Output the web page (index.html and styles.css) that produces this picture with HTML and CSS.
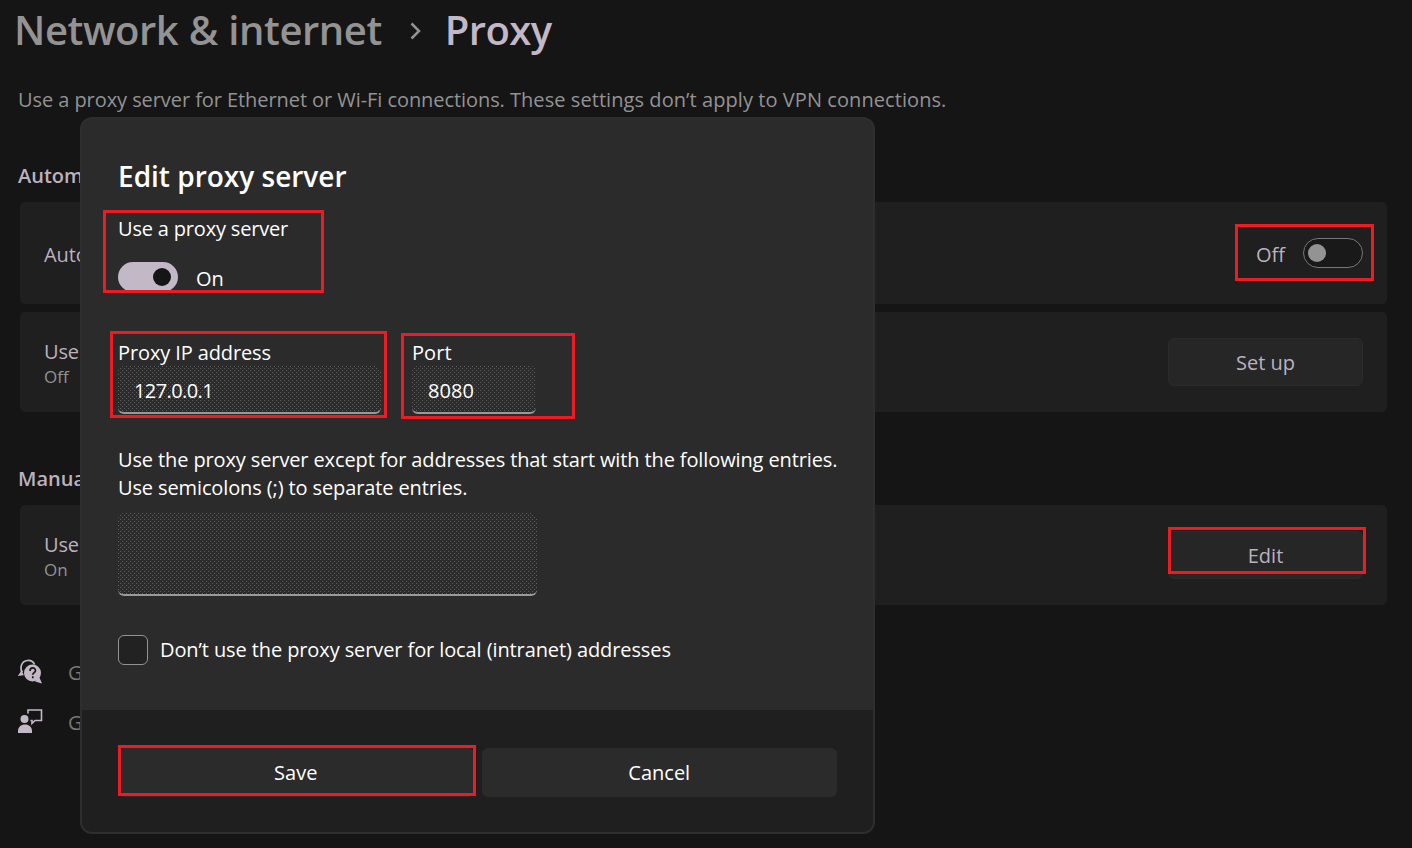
FILE: index.html
```
<!DOCTYPE html>
<html lang="en">
<head>
<meta charset="utf-8">
<title>Proxy</title>
<link rel="stylesheet" href="styles.css">
</head>
<body>
<main class="page">
  <header class="crumbs">
    <h1 class="crumb crumb-parent">Network &amp; internet</h1>
    <svg class="chevron" width="12" height="18" viewBox="0 0 12 18"><path d="M1.500 1.500L9 9l-7.500 7.500" fill="none" stroke="#939393" stroke-width="2.500"/></svg>
    <h1 class="crumb crumb-current">Proxy</h1>
  </header>
  <p class="intro"><span class="intro-first">Use a proxy server for Ethernet or Wi-Fi connections. </span><span class="intro-second">These settings don’t apply to VPN connections.</span></p>

  <h2 class="section">Autom</h2>
  <section class="card card-tall">
    <div class="labels"><span class="label">Auto</span></div>
    <div class="toggle-row"><span>Off</span><span class="toggle toggle-off"></span></div>
  </section>
  <section class="card">
    <div class="labels"><span class="label">Use</span><span class="state">Off</span></div>
    <button class="btn">Set up</button>
  </section>

  <h2 class="section section-manual">Manua</h2>
  <section class="card">
    <div class="labels"><span class="label">Use</span><span class="state">On</span></div>
    <button class="btn">Edit</button>
  </section>

  <nav class="links">
    <a class="link">
      <svg class="link-icon" width="26" height="26" viewBox="0 0 26 26"><path d="M4.500 15.500C1.500 9 3 2 9.500 1.500c3.500-.300 6 1.500 7 4M4.500 11.500L1.500 16l4-.500" fill="none" stroke="#c3b8c6" stroke-width="1.700"/><circle cx="14.500" cy="14" r="8.500" fill="#c3b8c6"/><path d="M21 17.500l3 7-7-2z" fill="#c3b8c6"/><path d="M12 12c0-4 5.500-4 5.500-.500 0 2.200-2.700 2-2.700 4.300M14.800 17.300v2" fill="none" stroke="#151515" stroke-width="1.700"/></svg>
      <span>G</span></a>
    <a class="link">
      <svg class="link-icon" width="26" height="26" viewBox="0 0 26 26"><path d="M10 4.500V1h13.500v10.500H17l-3 2.800v-2.800h-1.500" fill="none" stroke="#c3b8c6" stroke-width="1.600"/><circle cx="6.500" cy="10" r="4" fill="#c3b8c6"/><path d="M0 24v-2c0-4 3-6.500 7-6.500s7 2.500 7 6.500v2z" fill="#c3b8c6"/></svg>
      <span>G</span></a>
  </nav>
</main>

<div class="dialog" role="dialog">
  <div class="dialog-body">
    <h2 class="dialog-title">Edit proxy server</h2>
    <div class="use">Use a proxy server</div>
    <div class="switch"><span class="toggle toggle-on"></span><span class="switch-text">On</span></div>
    <div class="fields">
      <label class="field field-ip"><span class="field-label">Proxy IP address</span><span class="input input-ip">127.0.0.1</span></label>
      <label class="field field-port"><span class="field-label">Port</span><span class="input">8080</span></label>
    </div>
    <p class="note">Use the proxy server except for addresses that start with the following entries.<br>Use semicolons (;) to separate entries.</p>
    <div class="input textarea"></div>
    <label class="check"><span class="box"></span><span>Don’t use the proxy server for local (intranet) addresses</span></label>
  </div>
  <footer class="dialog-foot"><button class="action">Save</button><button class="action">Cancel</button></footer>
</div>
<div class="mark mark-use"></div>
<div class="mark mark-ip"></div>
<div class="mark mark-port"></div>
<div class="mark mark-save"></div>
<div class="mark mark-off"></div>
<div class="mark mark-edit"></div>
</body>
</html>
```
FILE: styles.css
```
* { box-sizing: border-box; margin: 0; }
body { width: 1412px; height: 848px; overflow: hidden; position: relative; background: #151515; color: #bbb2be; font: 20px/28px "Open Sans", "Noto Sans", sans-serif; }
h1, h2 { font-weight: 600; }
button { font: inherit; color: inherit; border: 0; padding: 2px 0 0; }
.page { padding: 0 25px 0 18px; display: flex; flex-direction: column; }
.crumbs { display: flex; align-items: center; height: 61px; margin-left: -4px; }
.crumb { font-size: 40px; line-height: 59px; padding-bottom: 2px; white-space: nowrap; letter-spacing: -0.44px; }
.crumb-parent { color: #939393; word-spacing: 0.5px; }
.crumb-current { color: #c3b8c6; letter-spacing: -0.6px; }
.chevron { margin: 0 23px 0 28px; }
.intro { margin-top: 25px; color: #939393; white-space: nowrap; }
.intro-first { letter-spacing: -0.07px; }
.intro-second { letter-spacing: 0.07px; }
.section { font-size: 20px; line-height: 28px; margin: 48px 0 12px; white-space: nowrap; }
.section-manual { margin-top: 53px; }
.card { margin-left: 2px; height: 100px; background: #1f1f1f; border-radius: 5px; padding: 0 24px; display: flex; align-items: center; justify-content: space-between; }
.card-tall { height: 102px; margin-bottom: 8px; }
.labels { display: flex; flex-direction: column; padding-top: 2px; }
.card-tall .labels { padding-top: 3px; }
.label { letter-spacing: -0.12px; }
.state { font-size: 17px; line-height: 22px; color: #939393; }
.btn { width: 195px; height: 48px; border-radius: 6px; background: #262626; border: 1px solid #2b2b2b; }
.toggle-row, .switch { display: flex; align-items: center; gap: 18px; }
.toggle-row > :first-child { padding-top: 3px; }
.toggle { width: 60px; height: 30px; border-radius: 15px; display: flex; align-items: center; }
.toggle::before { content: ""; width: 18px; height: 18px; border-radius: 50%; }
.toggle-off { border: 1px solid #777; background: #191919; padding-left: 4px; }
.toggle-off::before { background: #939393; }
.toggle-on { background: #c3b8c6; justify-content: flex-end; padding-right: 7px; }
.toggle-on::before { background: #151515; }
.links { display: flex; flex-direction: column; gap: 22px; margin-top: 54px; }
.link { display: flex; align-items: center; gap: 24px; color: #777; height: 28px; }
.link-icon { margin-bottom: 2px; }
.dialog { position: absolute; left: 80px; top: 117px; width: 795px; height: 717px; border: 2px solid #2e2e2e; border-radius: 12px; background: #2b2b2b; color: #fff; overflow: hidden; display: flex; flex-direction: column; letter-spacing: -0.12px; }
.dialog-body { flex: 1; padding: 39px 36px 0; }
.dialog-title { font-size: 28px; line-height: 36px; letter-spacing: 0; }
.use { margin-top: 21px; letter-spacing: -0.18px; }
.switch { margin-top: 18px; }
.switch-text { padding-top: 4px; }
.fields { display: flex; gap: 31px; margin-top: 47px; }
.field { display: flex; flex-direction: column; }
.field-label { line-height: 26px; }
.field-ip { width: 263px; }
.field-port { width: 124px; letter-spacing: 0.06px; }
.input { height: 48px; border-radius: 6px; border-bottom: 2px solid #999; padding: 3px 16px 0; display: flex; align-items: center; background: radial-gradient(circle at 0.5px 0.5px, #626262 0.6px, transparent 0.7px) 0 0 / 4px 4px, radial-gradient(circle at 0.5px 0.5px, #626262 0.6px, transparent 0.7px) 2px 2px / 4px 4px, #2b2b2b; }
.input-ip { letter-spacing: -0.6px; }
.note { margin-top: 32px; white-space: nowrap; }
.textarea { width: 419px; height: 83px; margin-top: 11px; }
.check { display: flex; align-items: center; gap: 12px; margin-top: 39px; letter-spacing: -0.1px; }
.box { width: 30px; height: 30px; border: 1.500px solid #939393; border-radius: 6px; background: #222; }
.dialog-foot { height: 122px; background: #1f1f1f; padding: 38px 36px 0; display: flex; gap: 8px; }
.action { flex: 1; height: 49px; border-radius: 6px; background: #2b2b2b; padding: 0; }
.mark { position: absolute; border: 3px solid #ed1c24; }
.mark-use { left: 103px; top: 210px; width: 221px; height: 83px; }
.mark-ip { left: 110px; top: 331px; width: 277px; height: 87px; }
.mark-port { left: 401px; top: 333px; width: 174px; height: 86px; }
.mark-save { left: 118px; top: 745px; width: 358px; height: 51px; }
.mark-off { left: 1235px; top: 224px; width: 139px; height: 57px; }
.mark-edit { left: 1168px; top: 527px; width: 198px; height: 47px; }
```
